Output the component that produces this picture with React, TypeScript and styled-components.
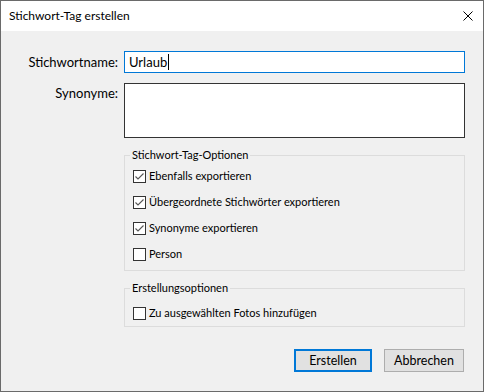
import React from "react";
import styled, { createGlobalStyle } from "styled-components";

const Global = createGlobalStyle`
  html, body { margin: 0; padding: 0; background: #f0f0f0; }
  * { box-sizing: border-box; }
`;

const FONT = `"Segoe UI", Lato, "Noto Sans", "Liberation Sans", sans-serif`;

const Window = styled.div`
  width: 484px;
  height: 392px;
  border: 1px solid #6a6a6a;
  background: #f0f0f0;
  display: flex;
  flex-direction: column;
  font-family: ${FONT};
  font-size: 11px;
  color: #000;
`;

const TitleBar = styled.div`
  height: 30px;
  background: #fff;
  display: flex;
  align-items: center;
  justify-content: space-between;
  padding: 0 10px 0 8px;
  flex-shrink: 0;
`;

const Title = styled.span`
  font-size: 12px;
  line-height: 16px;
`;

const CloseIcon = styled.svg`
  width: 10px;
  height: 10px;
  display: block;
`;

const Body = styled.div`
  flex: 1;
  padding: 20px 18px 0 0;
  display: flex;
  flex-direction: column;
`;

const FormGrid = styled.div`
  display: grid;
  grid-template-columns: 117px 341px;
  column-gap: 6px;
  row-gap: 10px;
  font-size: 13px;
`;

const Label = styled.div<{ $top?: boolean }>`
  text-align: right;
  line-height: 18px;
  align-self: ${(p) => (p.$top ? "start" : "center")};
  padding-top: ${(p) => (p.$top ? "1px" : "0")};
`;

const TextField = styled.div`
  height: 22px;
  border: 1px solid #0078d7;
  background: #fff;
  display: flex;
  align-items: center;
  padding-left: 4px;
  line-height: 18px;
`;

const Caret = styled.span`
  display: inline-block;
  width: 1px;
  height: 16px;
  background: #000;
  margin-left: 1px;
`;

const TextArea = styled.div`
  height: 55px;
  border: 1px solid #333;
  background: #fff;
`;

const Stack = styled.div`
  margin-left: 123px;
  display: flex;
  flex-direction: column;
`;

const Group = styled.fieldset<{ $padTop: number; $padBottom: number }>`
  margin: 9px 0 0 0;
  border: 1px solid #dcdcdc;
  padding: ${(p) => p.$padTop}px 5px ${(p) => p.$padBottom}px 5px;
  min-width: 0;
`;

const Legend = styled.legend`
  padding: 0 2px;
  line-height: 16px;
  font-size: 11px;
`;

const CheckRow = styled.div`
  height: 26px;
  display: flex;
  align-items: center;
  padding-left: 3px;
  gap: 3px;
  line-height: 16px;
`;

const Box = styled.span`
  width: 13px;
  height: 13px;
  border: 1px solid #333;
  background: #fff;
  display: flex;
  align-items: center;
  justify-content: center;
  flex-shrink: 0;
`;

const Buttons = styled.div`
  display: flex;
  justify-content: flex-end;
  gap: 12px;
  margin-top: 22px;
  padding-right: 1px;
`;

const Button = styled.button<{ $primary?: boolean; $w: number }>`
  width: ${(p) => p.$w}px;
  height: 23px;
  background: #e1e1e1;
  border: ${(p) => (p.$primary ? "2px solid #0078d7" : "1px solid #adadad")};
  font-family: ${FONT};
  font-size: 12.5px;
  color: #000;
  padding: 0;
  line-height: 16px;
`;

const Check: React.FC<{ checked?: boolean; label: string }> = ({ checked, label }) => (
  <CheckRow>
    <Box>
      {checked && (
        <svg width="11" height="11" viewBox="0 0 11 11">
          <path d="M1.5 5.5 L4 8 L9.5 2.5" fill="none" stroke="#555" strokeWidth="1.1" />
        </svg>
      )}
    </Box>
    <span>{label}</span>
  </CheckRow>
);

export default function App() {
  return (
    <>
      <Global />
      <Window>
        <TitleBar>
          <Title>Stichwort-Tag erstellen</Title>
          <CloseIcon viewBox="0 0 10 10">
            <path d="M0.5 0.5 L9.5 9.5 M9.5 0.5 L0.5 9.5" stroke="#000" strokeWidth="1" />
          </CloseIcon>
        </TitleBar>
        <Body>
          <FormGrid>
            <Label>Stichwortname:</Label>
            <TextField>
              Urlaub
              <Caret />
            </TextField>
            <Label $top>Synonyme:</Label>
            <TextArea />
          </FormGrid>
          <Stack>
            <Group $padTop={0} $padBottom={3}>
              <Legend>Stichwort-Tag-Optionen</Legend>
              <Check checked label="Ebenfalls exportieren" />
              <Check checked label="Übergeordnete Stichwörter exportieren" />
              <Check checked label="Synonyme exportieren" />
              <Check label="Person" />
            </Group>
            <Group $padTop={4} $padBottom={0}>
              <Legend>Erstellungsoptionen</Legend>
              <Check label="Zu ausgewählten Fotos hinzufügen" />
            </Group>
            <Buttons>
              <Button $primary $w={78}>Erstellen</Button>
              <Button $w={80}>Abbrechen</Button>
            </Buttons>
          </Stack>
        </Body>
      </Window>
    </>
  );
}
